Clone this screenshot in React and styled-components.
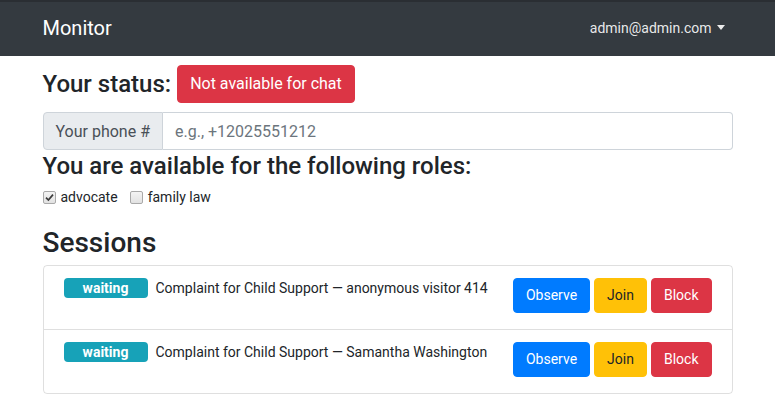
import styled, { createGlobalStyle } from "styled-components";

const GlobalStyle = createGlobalStyle`
  body {
    margin: 0;
    font-family: Roboto, "Liberation Sans", sans-serif;
    color: #212529;
    background: #fff;
  }
  * { box-sizing: border-box; }
`;

const Navbar = styled.nav`
  height: 56px;
  background-color: #343a40;
  border-top: 2px solid #2a2e33;
`;

const Container = styled.div`
  max-width: 720px;
  margin: 0 auto;
  padding: 0 15px;
`;

const NavInner = styled(Container)`
  height: 100%;
  display: flex;
  align-items: center;
  justify-content: space-between;
`;

const Brand = styled.span`
  font-size: 20px;
  color: #fff;
  margin-top: -2px;
`;

const NavLink = styled.span`
  font-size: 14px;
  color: rgba(255, 255, 255, 0.9);
  padding: 0 8px;
  display: flex;
  align-items: center;
  margin-top: -2px;
`;

const Caret = styled.span`
  display: inline-block;
  margin-left: 5px;
  border-top: 5px solid currentColor;
  border-left: 4px solid transparent;
  border-right: 4px solid transparent;
  margin-top: -2px;
`;

const StatusRow = styled.div`
  display: flex;
  align-items: center;
  gap: 6px;
  margin-top: 9px;
`;

const Heading = styled.h3`
  margin: 0;
  font-size: ${(p) => p.$size || 28}px;
  font-weight: 500;
  line-height: 1.2;
`;

const Button = styled.button`
  font-family: inherit;
  font-size: ${(p) => p.$fs || 16}px;
  line-height: 1.5;
  padding: 6px 12px;
  border: 1px solid ${(p) => p.$bg};
  background-color: ${(p) => p.$bg};
  color: ${(p) => p.$color || "#fff"};
  border-radius: 4px;
`;

const InputGroup = styled.div`
  display: flex;
  height: 38px;
  margin-top: 9px;
`;

const Prepend = styled.span`
  display: flex;
  align-items: center;
  padding: 0 12px;
  font-size: 16px;
  color: #495057;
  background-color: #e9ecef;
  border: 1px solid #ced4da;
  border-radius: 4px 0 0 4px;
`;

const Input = styled.input`
  flex: 1;
  font-family: inherit;
  font-size: 16px;
  padding: 0 12px;
  color: #495057;
  border: 1px solid #ced4da;
  border-left: none;
  border-radius: 0 4px 4px 0;
  &::placeholder { color: #6c757d; }
`;

const RolesHeading = styled(Heading)`
  margin-top: 2px;
`;

const Roles = styled.div`
  display: flex;
  gap: 12px;
  margin-top: 6px;
  font-size: 14px;
  line-height: 21px;
`;

const Check = styled.label`
  display: flex;
  align-items: center;
  gap: 5px;
`;

const Box = styled.span`
  display: inline-flex;
  align-items: center;
  justify-content: center;
  width: 13px;
  height: 13px;
  border: 1px solid #a9a9a9;
  border-radius: 2px;
  background: linear-gradient(#f4f4f4, #e2e2e2);
`;

const SessionsHeading = styled(Heading)`
  margin-top: 18px;
  margin-bottom: 6px;
`;

const List = styled.div`
  border: 1px solid rgba(0, 0, 0, 0.125);
  border-radius: 4px;
`;

const Item = styled.div`
  display: flex;
  justify-content: space-between;
  align-items: flex-start;
  padding: 12px 20px 16px;
  & + & { border-top: 1px solid rgba(0, 0, 0, 0.125); }
`;

const Info = styled.div`
  display: flex;
  align-items: center;
  gap: 8px;
  font-size: 14px;
  line-height: 20px;
`;

const Badge = styled.span`
  display: inline-block;
  width: 84px;
  height: 20px;
  text-align: center;
  font-weight: 700;
  font-size: 14px;
  line-height: 20px;
  color: #fff;
  background-color: #17a2b8;
  border-radius: 4px;
`;

const Actions = styled.div`
  display: flex;
  gap: 4px;
`;

function Checkbox({ checked, label }) {
  return (
    <Check>
      <Box>
        {checked && (
          <svg width="9" height="9" viewBox="0 0 9 9">
            <path d="M1 4.6 L3.4 7 L8 1.6" fill="none" stroke="#3c3c3c" strokeWidth="1.7" />
          </svg>
        )}
      </Box>
      {label}
    </Check>
  );
}

const sessions = [
  "Complaint for Child Support — anonymous visitor 414",
  "Complaint for Child Support — Samantha Washington",
];

export default function App() {
  return (
    <>
      <GlobalStyle />
      <Navbar>
        <NavInner>
          <Brand>Monitor</Brand>
          <NavLink>
            admin@admin.com
            <Caret />
          </NavLink>
        </NavInner>
      </Navbar>
      <Container>
        <StatusRow>
          <Heading $size={24}>Your status:</Heading>
          <Button $bg="#dc3545">Not available for chat</Button>
        </StatusRow>
        <InputGroup>
          <Prepend>Your phone #</Prepend>
          <Input placeholder="e.g., +12025551212" />
        </InputGroup>
        <RolesHeading $size={24}>You are available for the following roles:</RolesHeading>
        <Roles>
          <Checkbox checked label="advocate" />
          <Checkbox label="family law" />
        </Roles>
        <SessionsHeading>Sessions</SessionsHeading>
        <List>
          {sessions.map((s) => (
            <Item key={s}>
              <Info>
                <Badge>waiting</Badge>
                {s}
              </Info>
              <Actions>
                <Button $bg="#007bff" $fs={14}>Observe</Button>
                <Button $bg="#ffc107" $color="#212529" $fs={14}>Join</Button>
                <Button $bg="#dc3545" $fs={14}>Block</Button>
              </Actions>
            </Item>
          ))}
        </List>
      </Container>
    </>
  );
}
